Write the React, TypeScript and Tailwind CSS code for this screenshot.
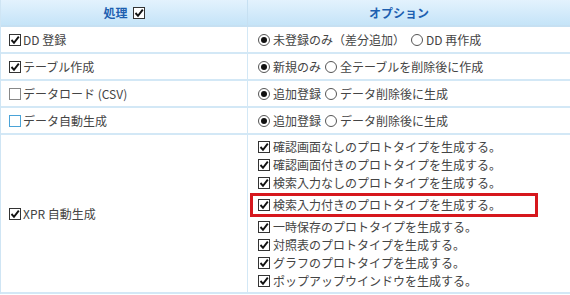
import React from 'react';

function CheckBox({ checked, blue }: { checked: boolean; blue?: boolean }) {
  return (
    <span
      className={`inline-flex h-[12px] w-[12px] shrink-0 items-center justify-center border bg-white ${
        blue ? 'border-[#4aa3d8]' : checked ? 'border-[#333]' : 'border-[#888]'
      }`}
    >
      {checked && (
        <svg width="10" height="10" viewBox="0 0 10 10">
          <path d="M1.5 5 L4 7.8 L8.8 1.6" fill="none" stroke="#111" strokeWidth="1.9" />
        </svg>
      )}
    </span>
  );
}

function Radio({ checked }: { checked: boolean }) {
  return (
    <span className="inline-flex h-[12px] w-[12px] shrink-0 items-center justify-center rounded-full border border-[#555] bg-white">
      {checked && <span className="h-[6px] w-[6px] rounded-full bg-[#111]" />}
    </span>
  );
}

const rows = [
  { label: 'DD 登録', checked: true, opts: [['未登録のみ（差分追加）', true], ['DD 再作成', false]] as [string, boolean][] },
  { label: 'テーブル作成', checked: true, opts: [['新規のみ', true], ['全テーブルを削除後に作成', false]] as [string, boolean][] },
  { label: 'データロード (CSV)', checked: false, opts: [['追加登録', true], ['データ削除後に生成', false]] as [string, boolean][] },
  { label: 'データ自動生成', checked: false, blue: true, opts: [['追加登録', true], ['データ削除後に生成', false]] as [string, boolean][] },
];

const prototypes = [
  '確認画面なしのプロトタイプを生成する。',
  '確認画面付きのプロトタイプを生成する。',
  '検索入力なしのプロトタイプを生成する。',
  '検索入力付きのプロトタイプを生成する。',
  '一時保存のプロトタイプを生成する。',
  '対照表のプロトタイプを生成する。',
  'グラフのプロトタイプを生成する。',
  'ポップアップウインドウを生成する。',
];

export default function App() {
  return (
    <div
      className="h-[295px] w-[570px] overflow-hidden bg-white text-[12px] text-[#444]"
      style={{ fontFamily: '"Noto Sans CJK JP", "Noto Sans", sans-serif' }}
    >
      <div className="grid grid-cols-[247px_1fr] border-l border-[#cfe5f4]">
        {/* header */}
        <div className="flex h-[27px] items-center justify-center gap-[5px] border-b-2 border-r border-[#c6e0f2] bg-gradient-to-b from-[#e3f2fd] to-[#c5e4f8] font-bold text-[#1d5fb0]">
          <span>処理</span>
          <CheckBox checked />
        </div>
        <div className="flex h-[27px] items-center justify-center border-b-2 border-[#c6e0f2] bg-gradient-to-b from-[#e3f2fd] to-[#c5e4f8] pr-[20px] font-bold text-[#1d5fb0]">
          オプション
        </div>

        {rows.map((r) => (
          <React.Fragment key={r.label}>
            <div className="flex h-[27px] items-center gap-[2px] border-b-2 border-r border-[#d3e8f6] pl-[8px]">
              <CheckBox checked={r.checked} blue={r.blue} />
              <span>{r.label}</span>
            </div>
            <div className="flex h-[27px] items-center border-b-2 border-[#d3e8f6] pl-[10px]">
              {r.opts.map(([t, c], i) => (
                <span key={t} className={`flex items-center gap-[3px] ${i === 1 ? (r.label === 'DD 登録' ? 'ml-[6px]' : 'ml-[4px]') : ''}`}>
                  <Radio checked={c} />
                  <span>{t}</span>
                </span>
              ))}
            </div>
          </React.Fragment>
        ))}

        <div className="flex h-[159px] items-center gap-[2px] border-b-2 border-r border-[#d3e8f6] pl-[8px]">
          <CheckBox checked />
          <span>XPR 自動生成</span>
        </div>
        <div className="flex h-[159px] flex-col justify-center border-b-2 border-[#d3e8f6] pl-[10px]">
          {prototypes.map((p, i) =>
            i === 3 ? (
              <div
                key={p}
                className="-ml-[8px] my-[1px] flex h-[24px] w-[288px] items-center gap-[3px] border-[3px] border-[#d6171d] pl-[5px]"
              >
                <CheckBox checked />
                <span>{p}</span>
              </div>
            ) : (
              <div key={p} className="flex h-[18px] items-center gap-[3px]">
                <CheckBox checked />
                <span>{p}</span>
              </div>
            )
          )}
        </div>
      </div>
    </div>
  );
}
